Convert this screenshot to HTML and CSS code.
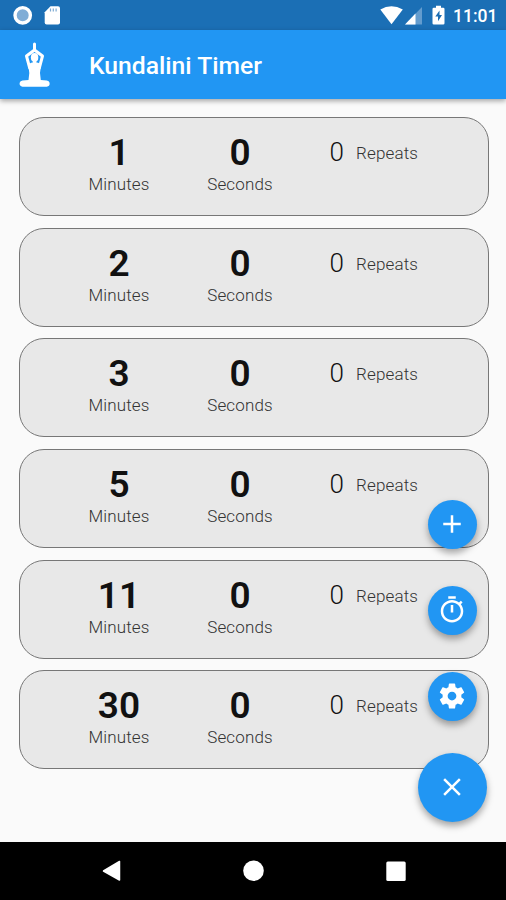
FILE: index.html
```html
<!DOCTYPE html>
<html lang="en">
<head>
<meta charset="utf-8">
<title>Kundalini Timer</title>
<link rel="stylesheet" href="styles.css">
</head>
<body>
<div class="status">
  <svg class="status-left" width="52" height="20" viewBox="12 5 52 20">
    <circle cx="22.7" cy="15.3" r="7.7" fill="#80add6" stroke="#fff" stroke-width="3.4"/>
    <path d="M50.5 6.3H58q2 0 2 2v14.2q0 2-2 2H46.7q-2 0-2-2V12.2z" fill="#fff"/>
    <path d="M50.5 8.5v3M53.3 8.5v3M56.1 8.5v3" stroke="#7daad2" stroke-width="1.2"/>
  </svg>
  <svg class="status-right" width="68" height="20" viewBox="380 5 68 20">
    <path d="M380.3 9.6Q391.5 2.8 402.800 9.600L391.500 24.300z" fill="#fff"/>
    <path d="M422 7v17.600h-17z" fill="#639cce"/>
    <path d="M415.500 13.500v11.100H405z" fill="#fff"/>
    <path d="M436 5.800h5v2h2.200q1.300 0 1.300 1.300v14.200q0 1.300-1.300 1.300h-9.400q-1.300 0-1.300-1.300V9.100q0-1.300 1.300-1.300h2.200z" fill="#fff"/>
    <path d="M439.500 10.500l-4.200 6h2.700v4.700l4-6.200h-2.500z" fill="#1b6db3"/>
  </svg>
  <span class="clock">11:01</span>
</div>
<header class="appbar">
  <svg class="logo" width="34" height="48" viewBox="0 0 34 48">
    <path d="M16.500 3v6M16.500 9L8.500 15l3.200 12M16.500 9l8 6-3.200 12" fill="none" stroke="#fff" stroke-width="3" stroke-linecap="round" stroke-linejoin="round"/>
    <ellipse cx="16.600" cy="16.500" rx="3.700" ry="4.400" fill="#fff"/>
    <path d="M14.800 19h3.600v2.500q3.800 0 4.500 3.500L22 32l.8 7q3 .3 6 .5c3.700.5 4 5.800 0 6.200H4.500c-4-.5-3.700-5.700 0-6.200q3-.2 6-.5l.8-7-.9-7q.7-3.500 4.400-3.500z" fill="#fff"/>
  </svg>
  <h1 class="title">Kundalini Timer</h1>
</header>
<main class="list">
  <section class="card"><div class="unit"><b>1</b><span>Minutes</span></div><div class="unit"><b>0</b><span>Seconds</span></div><div class="repeats"><i>0</i><span>Repeats</span></div></section>
  <section class="card"><div class="unit"><b>2</b><span>Minutes</span></div><div class="unit"><b>0</b><span>Seconds</span></div><div class="repeats"><i>0</i><span>Repeats</span></div></section>
  <section class="card"><div class="unit"><b>3</b><span>Minutes</span></div><div class="unit"><b>0</b><span>Seconds</span></div><div class="repeats"><i>0</i><span>Repeats</span></div></section>
  <section class="card"><div class="unit"><b>5</b><span>Minutes</span></div><div class="unit"><b>0</b><span>Seconds</span></div><div class="repeats"><i>0</i><span>Repeats</span></div></section>
  <section class="card"><div class="unit"><b>11</b><span>Minutes</span></div><div class="unit"><b>0</b><span>Seconds</span></div><div class="repeats"><i>0</i><span>Repeats</span></div></section>
  <section class="card"><div class="unit"><b>30</b><span>Minutes</span></div><div class="unit"><b>0</b><span>Seconds</span></div><div class="repeats"><i>0</i><span>Repeats</span></div></section>
</main>
<div class="actions">
  <button class="fab" aria-label="Add"><svg width="30" height="30" viewBox="0 0 24 24"><path d="M19 13h-6v6h-2v-6H5v-2h6V5h2v6h6z"/></svg></button>
  <button class="fab" aria-label="Timer"><svg width="30" height="30" viewBox="0 0 24 24"><path d="M15 1H9v2h6V1zm-4 13h2V8h-2v6zm8.030-6.610l1.420-1.420c-.43-.51-.9-.99-1.410-1.410l-1.420 1.420C16.070 4.740 14.120 4 12 4c-4.970 0-9 4.030-9 9s4.020 9 9 9 9-4.030 9-9c0-2.120-.74-4.070-1.970-5.610zM12 20c-3.870 0-7-3.130-7-7s3.130-7 7-7 7 3.130 7 7-3.130 7-7 7z"/></svg></button>
  <button class="fab" aria-label="Settings"><svg width="30" height="30" viewBox="0 0 24 24"><path d="M19.430 12.980c.04-.32.07-.64.07-.98s-.03-.66-.07-.98l2.110-1.650c.19-.15.24-.42.12-.64l-2-3.460c-.12-.22-.39-.3-.61-.22l-2.490 1c-.52-.4-1.080-.73-1.690-.98l-.38-2.650C14.460 2.180 14.250 2 14 2h-4c-.25 0-.46.18-.49.42l-.38 2.650c-.61.25-1.170.59-1.690.98l-2.490-1c-.23-.09-.49 0-.61.22l-2 3.460c-.13.22-.07.49.12.64l2.110 1.650c-.04.32-.07.65-.07.98s.03.66.07.98l-2.110 1.650c-.19.15-.24.42-.12.64l2 3.460c.12.22.39.3.61.22l2.490-1c.52.4 1.080.73 1.690.98l.38 2.650c.03.24.24.42.49.42h4c.25 0 .46-.18.49-.42l.38-2.650c.61-.25 1.170-.59 1.690-.98l2.490 1c.23.09.49 0 .61-.22l2-3.460c.12-.22.07-.49-.12-.64l-2.110-1.650zM12 15.500c-1.930 0-3.500-1.570-3.500-3.500s1.570-3.500 3.500-3.500 3.500 1.570 3.500 3.500-1.570 3.500-3.500 3.500z"/></svg></button>
  <button class="fab main" aria-label="Close"><svg width="30" height="30" viewBox="0 0 24 24"><path d="M19 6.410L17.590 5 12 10.590 6.410 5 5 6.410 10.590 12 5 17.590 6.410 19 12 13.410 17.590 19 19 17.590 13.410 12z"/></svg></button>
</div>
<nav class="navbar">
  <svg width="20" height="24" viewBox="0 0 20 24"><path d="M18.500 2.500v18.500L2.500 12z" fill="#fff" stroke="#fff" stroke-width="1.500" stroke-linejoin="round"/></svg>
  <svg width="24" height="24" viewBox="0 0 24 24"><circle cx="11.500" cy="11.700" r="10.300" fill="#fff"/></svg>
  <svg width="20" height="24" viewBox="0 0 20 24"><rect x=".3" y="2.500" width="19.400" height="19.400" rx="1.500" fill="#fff"/></svg>
</nav>
</body>
</html>
```

FILE: styles.css
```css
* { box-sizing: border-box; }
body {
  margin: 0;
  height: 900px;
  overflow: hidden;
  position: relative;
  display: flex;
  flex-direction: column;
  background: #fafafa;
  font-family: Roboto, sans-serif;
  color: #111;
}
.status {
  height: 30px;
  flex: none;
  display: flex;
  padding: 5px 9px 0 12px;
  background: #1b6fb5;
  color: #fff;
}
.status-right { margin-left: auto; }
.clock { width: 44px; margin-left: 5px; font-size: 17.500px; line-height: 22px; font-weight: 500; }
.appbar {
  height: 69px;
  flex: none;
  display: flex;
  align-items: center;
  padding-left: 18px;
  background: #2196f3;
  box-shadow: 0 2px 5px rgba(0, 0, 0, .35);
  color: #fff;
}
.title { margin: 2px 0 0 37px; font-size: 24.700px; line-height: 30px; font-weight: 500; }
.list {
  flex: 1;
  display: flex;
  flex-direction: column;
  gap: 11.700px;
  padding: 17.900px 17px 0 18.500px;
}
.card {
  height: 99px;
  flex: none;
  display: grid;
  grid-template-columns: 121px 121px 1fr;
  padding: 13px 0 0 39px;
  background: #e8e8e8;
  border: 1px solid #777;
  border-radius: 25px;
}
.unit { display: flex; flex-direction: column; align-items: center; }
.unit b { font-size: 37px; line-height: 44px; font-weight: 600; }
.unit span, .repeats span { font-size: 17px; line-height: 20px; letter-spacing: .15px; font-weight: 350; color: #333; }
.unit span { margin-top: -1px; }
.repeats { display: flex; align-items: center; height: 42px; padding-left: 29px; }
.repeats i { width: 26.500px; font-size: 26px; line-height: 42px; font-style: normal; font-weight: 350; }
.repeats span { padding-top: 2px; }
.actions {
  position: absolute;
  right: 19px;
  bottom: 78px;
  display: flex;
  flex-direction: column;
  align-items: center;
  gap: 37px;
}
.fab {
  width: 49px;
  height: 49px;
  padding: 0 1px 1px 0;
  border: 0;
  border-radius: 50%;
  display: flex;
  align-items: center;
  justify-content: center;
  background: #2196f3;
  box-shadow: 0 4px 7px rgba(0, 0, 0, .35);
}
.fab svg { fill: #fff; }
.fab.main { width: 69px; height: 69px; margin-top: -5px; }
.navbar {
  height: 58px;
  flex: none;
  display: flex;
  align-items: center;
  justify-content: space-between;
  padding: 0 100px 0 101px;
  background: #000;
}
```
